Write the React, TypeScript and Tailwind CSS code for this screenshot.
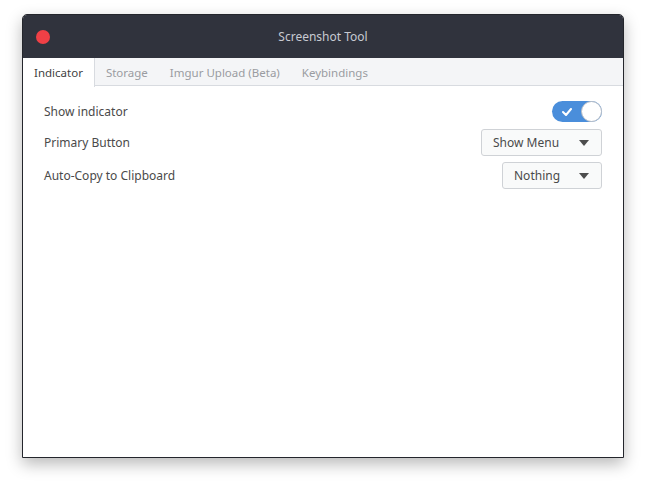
import { useState } from "react";

const TABS = ["Indicator", "Storage", "Imgur Upload (Beta)", "Keybindings"];

const Caret = () => (
  <svg width="10" height="6" viewBox="0 0 10 6" className="fill-[#4d4d4d]">
    <path d="M0 0h10L5 6z" />
  </svg>
);

const Dropdown = ({ value, width }: { value: string; width: string }) => (
  <div
    className={`${width} h-[27px] flex items-center justify-between pl-[11px] pr-[12px] rounded-[3px] border border-[#cfd2d6] bg-[#f9fafa] text-[12px] text-[#4a4a4a]`}
  >
    <span>{value}</span>
    <Caret />
  </div>
);

export default function App() {
  const [tab, setTab] = useState(0);
  const [on, setOn] = useState(true);

  return (
    <div
      className="w-[646px] h-[489px] bg-white pl-[22px] pt-[14px]"
      style={{ fontFamily: '"Noto Sans", "Open Sans", sans-serif' }}
    >
      <div className="w-[602px] h-[444px] flex flex-col rounded-t-[5px] bg-white border border-[#24262c] shadow-[0_6px_16px_rgba(0,0,0,0.28)] overflow-hidden">
        {/* Titlebar */}
        <div className="h-[43px] shrink-0 flex items-center bg-[#30333d] px-[13px] relative">
          <div className="w-[14px] h-[14px] rounded-full bg-[#ef4046]" />
          <div className="absolute inset-0 flex items-center justify-center text-[12px] text-[#c7cad1]">
            Screenshot Tool
          </div>
        </div>

        {/* Tabs */}
        <div className="h-[28px] shrink-0 flex bg-[#f4f5f7] border-b border-[#d8dbe0]">
          {TABS.map((t, i) => (
            <button
              key={t}
              onClick={() => setTab(i)}
              className={`h-[28px] px-[11px] pt-[1px] text-[11.5px] cursor-pointer ${
                tab === i
                  ? "bg-white text-[#3f3f3f] border-r border-[#d8dbe0] h-[29px]"
                  : "text-[#9a9ca1]"
              }`}
            >
              {t}
            </button>
          ))}
        </div>

        {/* Content */}
        {tab === 0 && (
          <div className="flex flex-col px-[21px] pt-[13px] text-[12px] text-[#4a4a4a]">
            <div className="h-[25px] flex items-center justify-between">
              <span>Show indicator</span>
              <button
                onClick={() => setOn((v) => !v)}
                className={`w-[50px] h-[21px] rounded-full relative cursor-pointer ${
                  on ? "bg-[#4a8edb]" : "bg-[#d5d7db]"
                }`}
              >
                <svg
                  width="10"
                  height="8"
                  viewBox="0 0 10 8"
                  className="absolute left-[10px] top-[7px]"
                >
                  <path
                    d="M1 4l3 3 5-6"
                    fill="none"
                    stroke="white"
                    strokeWidth="2"
                    strokeLinecap="round"
                    strokeLinejoin="round"
                  />
                </svg>
                <span
                  className={`absolute top-[0px] w-[21px] h-[21px] rounded-full bg-white border border-[#b9bec6] ${
                    on ? "right-[0px]" : "left-[0px]"
                  }`}
                />
              </button>
            </div>
            <div className="h-[27px] mt-[5px] flex items-center justify-between">
              <span>Primary Button</span>
              <Dropdown value="Show Menu" width="w-[121px]" />
            </div>
            <div className="h-[27px] mt-[6px] flex items-center justify-between">
              <span>Auto-Copy to Clipboard</span>
              <Dropdown value="Nothing" width="w-[100px]" />
            </div>
          </div>
        )}
      </div>
    </div>
  );
}
